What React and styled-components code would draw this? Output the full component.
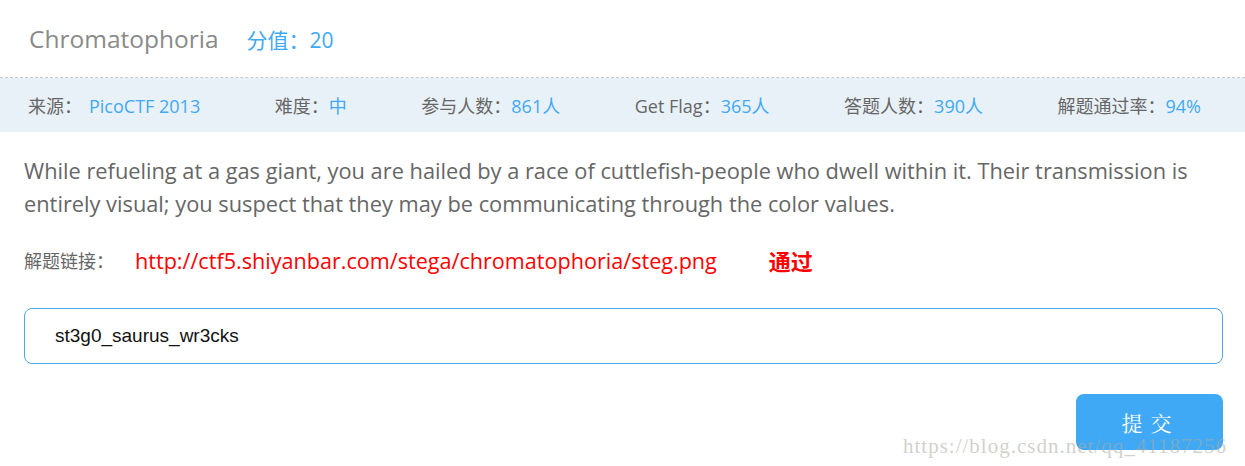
import React from "react";
import styled, { createGlobalStyle } from "styled-components";

const GlobalStyle = createGlobalStyle`
    html, body {
        margin: 0;
        padding: 0;
        background: #fff;
    }
    body {
        font-family: "Open Sans", "Noto Sans CJK SC", sans-serif;
    }
`;

const Page = styled.div`
    position: relative;
    width: 1245px;
    height: 466px;
    overflow: hidden;
    background: #fff;
`;

const Header = styled.div`
    display: flex;
    align-items: center;
    height: 78px;
    padding-left: 29px;
    border-bottom: 1px dashed #c8c8c8;
    box-sizing: border-box;
`;

const Title = styled.span`
    font-size: 24.5px;
    color: #8a8a8a;
    margin-right: 28px;
`;

const Score = styled.span`
    font-size: 21px;
    color: #3fa9f5;
`;

const InfoBar = styled.div`
    display: flex;
    justify-content: space-between;
    align-items: center;
    height: 54px;
    padding: 0 44px 0 28px;
    background: #e9f1f8;
    font-size: 18px;
`;

const Label = styled.span`
    color: #666;
`;

const Value = styled.span`
    color: #3fa9f5;
    margin-left: ${(p) => p.gap || 0}px;
`;

const Body = styled.div`
    padding: 22px 22px 0 24px;
`;

const Desc = styled.p`
    margin: 0;
    font-size: 21.8px;
    line-height: 33px;
    color: #666;
`;

const LinkRow = styled.div`
    display: flex;
    align-items: center;
    margin-top: 23px;
    height: 34px;
`;

const LinkLabel = styled.span`
    font-size: 18px;
    color: #666;
    margin-right: 21px;
`;

const FlagLink = styled.span`
    font-size: 21.6px;
    color: #ff0000;
`;

const Pass = styled.span`
    font-size: 22px;
    font-weight: bold;
    color: #ff0000;
    margin-left: 52px;
`;

const Input = styled.div`
    display: flex;
    align-items: center;
    margin-top: 31px;
    height: 56px;
    box-sizing: border-box;
    padding-left: 30px;
    border: 1.5px solid #4aa8ee;
    border-radius: 8px;
    font-family: "Liberation Sans", Arial, sans-serif;
    font-size: 19px;
    color: #111;
`;

const Actions = styled.div`
    display: flex;
    justify-content: flex-end;
    margin-top: 30px;
`;

const Submit = styled.button`
    width: 147px;
    height: 56px;
    border: none;
    border-radius: 8px;
    background: #3fa9f5;
    color: #fff;
    font-family: "Noto Serif CJK SC", "Noto Sans CJK SC", serif;
    font-size: 21px;
    letter-spacing: 8px;
    padding-left: 8px;
`;

const Watermark = styled.div`
    position: absolute;
    left: 903px;
    top: 434px;
    font-family: "Liberation Serif", "DejaVu Serif", serif;
    font-size: 21px;
    color: rgba(170, 170, 160, 0.55);
    letter-spacing: 1px;
`;

const info = [
    { label: "来源：", value: "PicoCTF 2013", gap: 7 },
    { label: "难度：", value: "中" },
    { label: "参与人数：", value: "861人" },
    { label: "Get Flag：", value: "365人" },
    { label: "答题人数：", value: "390人" },
    { label: "解题通过率：", value: "94%" },
];

const App = () => {
    return (
        <Page>
            <GlobalStyle />
            <Header>
                <Title>Chromatophoria</Title>
                <Score>分值：20</Score>
            </Header>
            <InfoBar>
                {info.map((item) => (
                    <div key={item.label}>
                        <Label>{item.label}</Label>
                        <Value gap={item.gap}>{item.value}</Value>
                    </div>
                ))}
            </InfoBar>
            <Body>
                <Desc>
                    While refueling at a gas giant, you are hailed by a race of cuttlefish-people who dwell within it. Their transmission is entirely visual; you suspect that they may be communicating through the color values.
                </Desc>
                <LinkRow>
                    <LinkLabel>解题链接：</LinkLabel>
                    <FlagLink>http://ctf5.shiyanbar.com/stega/chromatophoria/steg.png</FlagLink>
                    <Pass>通过</Pass>
                </LinkRow>
                <Input>st3g0_saurus_wr3cks</Input>
                <Actions>
                    <Submit>提交</Submit>
                </Actions>
            </Body>
            <Watermark>https://blog.csdn.net/qq_41187256</Watermark>
        </Page>
    );
};

export default App;
